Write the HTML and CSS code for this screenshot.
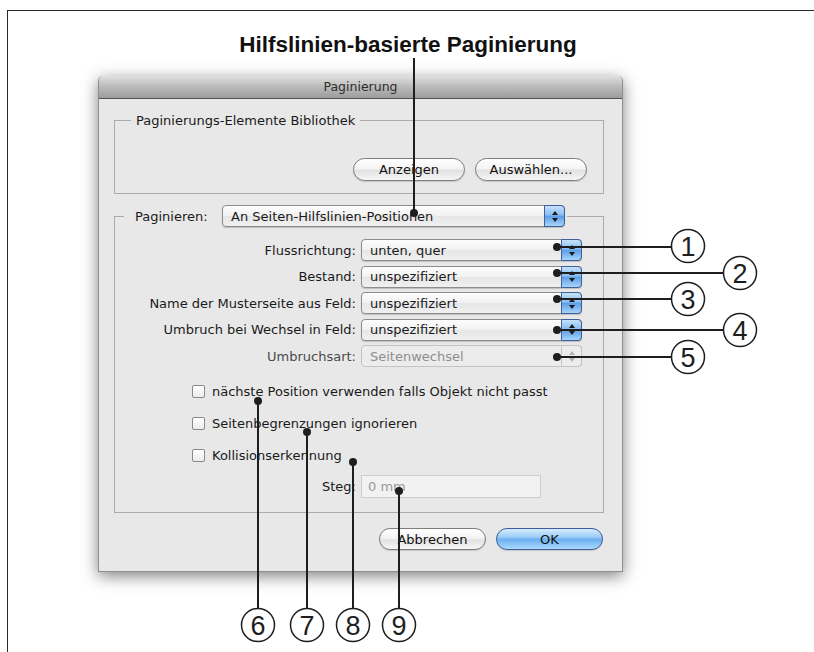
FILE: index.html
```html
<!DOCTYPE html>
<html lang="de">

<head>
    <meta charset="UTF-8" />
    <title>Hilfslinien-basierte Paginierung</title>
    <link rel="stylesheet" href="styles.css">
</head>

<body>
    <div class="page">
        <h1 class="caption">Hilfslinien-basierte Paginierung</h1>

        <div class="dialog">
            <div class="titlebar">Paginierung</div>
            <div class="dialog-body">

                <div class="group library">
                    <div class="group-title">Paginierungs-Elemente Bibliothek</div>
                    <div class="button-row">
                        <button class="aqua">Anzeigen</button>
                        <button class="aqua">Auswählen...</button>
                    </div>
                </div>

                <div class="group paginate">
                    <div class="group-title">
                        <span class="legend-label">Paginieren:</span>
                        <span class="popup wide">An Seiten-Hilfslinien-Positionen<span class="stepper"></span></span>
                    </div>

                    <div class="rows">
                        <div class="field-row">
                            <label>Flussrichtung:</label>
                            <div class="popup">unten, quer<span class="stepper"></span></div>
                        </div>
                        <div class="field-row">
                            <label>Bestand:</label>
                            <div class="popup">unspezifiziert<span class="stepper"></span></div>
                        </div>
                        <div class="field-row">
                            <label>Name der Musterseite aus Feld:</label>
                            <div class="popup">unspezifiziert<span class="stepper"></span></div>
                        </div>
                        <div class="field-row">
                            <label>Umbruch bei Wechsel in Feld:</label>
                            <div class="popup">unspezifiziert<span class="stepper"></span></div>
                        </div>
                        <div class="field-row disabled">
                            <label>Umbruchsart:</label>
                            <div class="popup">Seitenwechsel<span class="stepper"></span></div>
                        </div>
                    </div>

                    <div class="checks">
                        <div class="check"><span class="box"></span>nächste Position verwenden falls Objekt nicht passt</div>
                        <div class="check"><span class="box"></span>Seitenbegrenzungen ignorieren</div>
                        <div class="check"><span class="box"></span>Kollisionserkennung</div>
                    </div>

                    <div class="field-row steg">
                        <label>Steg:</label>
                        <div class="textfield">0 mm</div>
                    </div>
                </div>

                <div class="dialog-buttons">
                    <button class="aqua">Abbrechen</button>
                    <button class="aqua default">OK</button>
                </div>
            </div>
        </div>
    </div>

    <!-- callout lines and numbers drawn over the screenshot -->
    <svg class="callouts" width="814" height="652" viewBox="0 0 814 652">
        <g class="lines">
            <line x1="414" y1="58" x2="414" y2="213" />
            <line x1="557" y1="247" x2="671.5" y2="247" />
            <line x1="557" y1="273" x2="723.5" y2="273" />
            <line x1="557" y1="299" x2="671.5" y2="299" />
            <line x1="557" y1="330" x2="723.5" y2="330" />
            <line x1="557" y1="357" x2="671.5" y2="357" />
            <line x1="258" y1="401" x2="258" y2="608" />
            <line x1="307" y1="432" x2="307" y2="608" />
            <line x1="353" y1="462" x2="353" y2="608" />
            <line x1="399" y1="491" x2="399" y2="608" />
        </g>
        <g class="dots">
            <circle cx="414" cy="213" r="4" />
            <circle cx="557" cy="247" r="4" />
            <circle cx="557" cy="273" r="4" />
            <circle cx="557" cy="299" r="4" />
            <circle cx="557" cy="330" r="4" />
            <circle cx="557" cy="357" r="4" />
            <circle cx="258" cy="401" r="4" />
            <circle cx="307" cy="432" r="4" />
            <circle cx="353" cy="462" r="4" />
            <circle cx="399" cy="491" r="4" />
        </g>
        <g class="marks">
            <circle cx="688" cy="246" r="16.5" /><text x="688" y="256">1</text>
            <circle cx="740" cy="273" r="16.5" /><text x="740" y="283">2</text>
            <circle cx="688" cy="299" r="16.5" /><text x="688" y="309">3</text>
            <circle cx="740" cy="330" r="16.5" /><text x="740" y="340">4</text>
            <circle cx="688" cy="357" r="16.5" /><text x="688" y="367">5</text>
            <circle cx="258" cy="625" r="16.5" /><text x="258" y="635">6</text>
            <circle cx="307" cy="625" r="16.5" /><text x="307" y="635">7</text>
            <circle cx="353" cy="625" r="16.5" /><text x="353" y="635">8</text>
            <circle cx="399" cy="625" r="16.5" /><text x="399" y="635">9</text>
        </g>
    </svg>
</body>

</html>
```

FILE: styles.css
```css
* {
    box-sizing: border-box;
    margin: 0;
    padding: 0;
}

body {
    position: relative;
    width: 814px;
    height: 652px;
    overflow: hidden;
    background-color: #ffffff;
    font-family: 'DejaVu Sans', sans-serif;
    font-size: 13px;
    color: #1a1a1a;
}

.page {
    margin: 10px 0 0 7px;
    height: 642px;
    border-top: 1.5px solid #2b2b2b;
    border-left: 1.5px solid #2b2b2b;
}

.caption {
    margin-top: 22px;
    height: 24px;
    line-height: 24px;
    text-align: center;
    padding-right: 6px;
    font-family: 'Liberation Sans', Arial, sans-serif;
    font-size: 22.5px;
    font-weight: bold;
    color: #111;
}

/* dialog window */

.dialog {
    width: 525px;
    margin: 19px 0 0 90px;
    background-color: #e8e8e8;
    border: 1px solid #8e8e8e;
    border-top: none;
    border-radius: 5px 5px 0 0;
    box-shadow: 0 4px 16px rgba(0, 0, 0, 0.5);
}

.titlebar {
    height: 23px;
    line-height: 22px;
    text-align: center;
    font-size: 12.5px;
    color: #2e2e2e;
    background: linear-gradient(#e0e0e0, #bdbdbd 45%, #9c9c9c);
    border-bottom: 1px solid #555555;
    border-radius: 5px 5px 0 0;
}

.dialog-body {
    padding: 21px 18px 21px 15px;
}

.group {
    border: 1px solid #ababab;
}

.group-title {
    width: fit-content;
    background-color: #e8e8e8;
}

.library {
    padding: 0 16px 12px 0;
}

.library .group-title {
    margin: -8px 0 0 16px;
    padding: 0 5px;
    line-height: 15px;
}

.button-row {
    display: flex;
    justify-content: flex-end;
    gap: 10px;
    margin-top: 30px;
}

button.aqua {
    height: 23px;
    padding: 0;
    font-family: 'DejaVu Sans', sans-serif;
    font-size: 13px;
    color: #111;
    border: 1px solid #7d7d7d;
    border-radius: 12px;
    background: linear-gradient(#ffffff, #f4f4f4 45%, #e2e2e2 55%, #f6f6f6);
    box-shadow: 0 1px 1px rgba(0, 0, 0, 0.15);
}

.button-row .aqua {
    width: 112px;
}

.paginate {
    margin-top: 22px;
    padding: 0 0 14px 0;
}

.paginate .group-title {
    display: flex;
    align-items: center;
    margin: -12px 0 0 9px;
    padding: 0 2px 0 11px;
}

.legend-label {
    width: 87px;
}

.popup {
    position: relative;
    display: flex;
    align-items: center;
    width: 221px;
    height: 22px;
    padding-left: 8px;
    border: 1px solid #8c8c8c;
    border-radius: 4px;
    background: linear-gradient(#fdfdfd, #f1f1f1 50%, #e6e6e6 52%, #f0f0f0);
    box-shadow: 0 1px 1px rgba(0, 0, 0, 0.18);
}

.popup.wide {
    width: 343px;
}

.stepper {
    position: absolute;
    top: -1px;
    right: -1px;
    bottom: -1px;
    width: 21px;
    display: flex;
    flex-direction: column;
    align-items: center;
    justify-content: center;
    gap: 3px;
    border: 1px solid #3f5f9e;
    border-radius: 0 4px 4px 0;
    background: linear-gradient(#c6e2fb, #87bdf2 45%, #5d9fe6 52%, #a7d4fb);
}

.stepper::before,
.stepper::after {
    content: "";
    border-left: 3px solid transparent;
    border-right: 3px solid transparent;
}

.stepper::before {
    border-bottom: 4px solid #1b1b1b;
}

.stepper::after {
    border-top: 4px solid #1b1b1b;
}

.rows {
    display: flex;
    flex-direction: column;
    gap: 4.5px;
    margin-top: 12px;
}

.field-row {
    display: flex;
    align-items: center;
    gap: 5px;
    height: 22px;
}

.field-row label {
    width: 241px;
    text-align: right;
}

.field-row.disabled label {
    color: #4a4a4a;
}

.field-row.disabled .popup {
    color: #8e8e8e;
    border-color: #c4c4c4;
    background: #ececec;
    box-shadow: none;
}

.field-row.disabled .stepper {
    border-color: #c4c4c4;
    background: transparent;
}

.field-row.disabled .stepper::before {
    border-bottom-color: #b4b4b4;
}

.field-row.disabled .stepper::after {
    border-top-color: #b4b4b4;
}

.checks {
    display: flex;
    flex-direction: column;
    gap: 19px;
    margin-top: 18px;
    padding-left: 77px;
}

.check {
    display: flex;
    align-items: center;
    height: 13px;
}

.box {
    width: 13px;
    height: 13px;
    margin-right: 7px;
    border: 1px solid #8a8a8a;
    border-radius: 2px;
    background: linear-gradient(#ffffff, #ececec);
}

.field-row.steg {
    height: 23px;
    margin-top: 13px;
}

.textfield {
    width: 180px;
    height: 23px;
    line-height: 21px;
    padding-left: 6px;
    color: #9a9a9a;
    background-color: #f2f2f2;
    border: 1px solid #cdcdcd;
}

.dialog-buttons {
    display: flex;
    justify-content: flex-end;
    gap: 10px;
    margin-top: 15px;
    padding-right: 1px;
}

.dialog-buttons .aqua {
    width: 107px;
    height: 22px;
}

button.aqua.default {
    border-color: #3d5c9c;
    background: linear-gradient(#d5ebfd, #9dcdf8 40%, #6cb0f0 52%, #a9dafd);
}

/* annotations */

.callouts {
    position: absolute;
    top: 0;
    left: 0;
    pointer-events: none;
}

.callouts .lines line {
    stroke: #1e1e1e;
    stroke-width: 2;
}

.callouts .dots circle {
    fill: #1e1e1e;
}

.callouts .marks circle {
    fill: #ffffff;
    stroke: #1e1e1e;
    stroke-width: 1.5;
}

.callouts .marks text {
    font-family: 'Liberation Sans', Arial, sans-serif;
    font-size: 27px;
    text-anchor: middle;
    fill: #1e1e1e;
}
```
